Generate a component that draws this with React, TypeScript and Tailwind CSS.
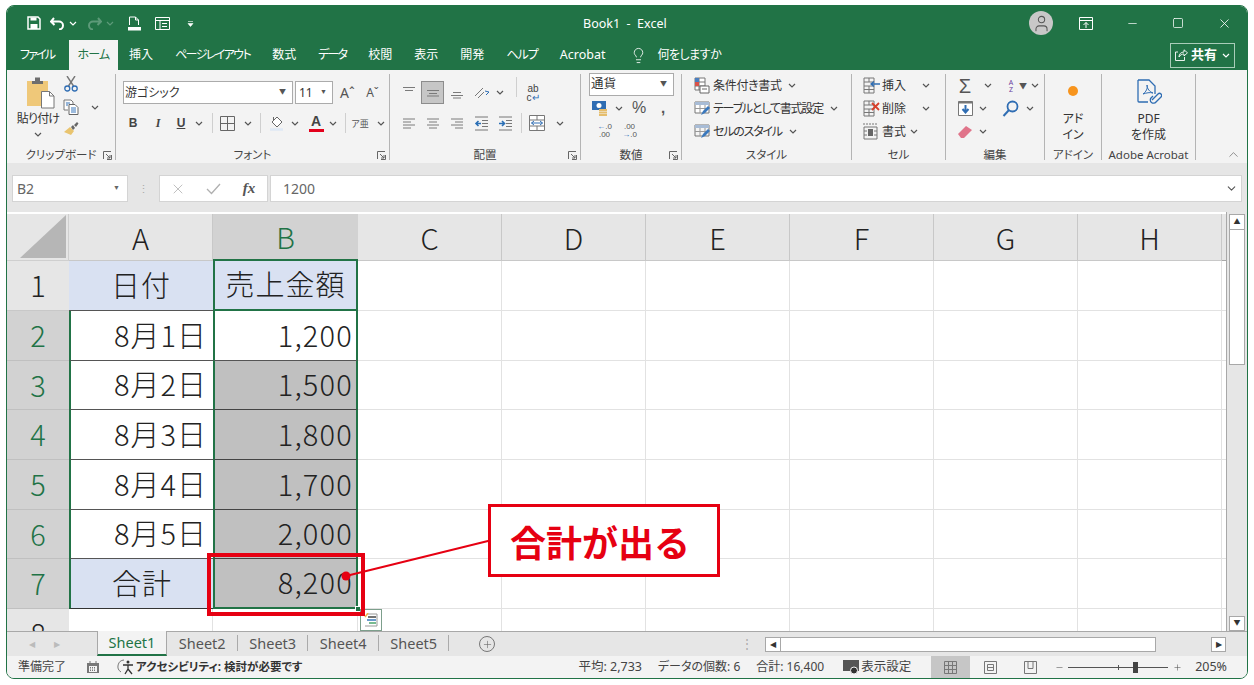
import { ChevronDown, ChevronUp, Lightbulb, Minus, Square, X, User, Plus } from "lucide-react";

const cjk = "font-['Noto_Sans','Noto_Sans_CJK_JP',sans-serif]";

function Chev({ className = "text-[#555]" }: { className?: string }) {
  return (
    <svg width="8" height="5" viewBox="0 0 8 5" className={className}>
      <path d="M1 1l3 3 3-3" fill="none" stroke="currentColor" strokeWidth="1.2" />
    </svg>
  );
}

function Launcher() {
  return (
    <svg width="9" height="9" viewBox="0 0 9 9" className="absolute right-[3px] bottom-[3px]">
      <path d="M.5 8V.5H8M8.5 4v4.5H4M3 3l4 4M7 4v3H4" fill="none" stroke="#666" strokeWidth="1" />
    </svg>
  );
}

function Group({ label, launcher, className, children }: { label: string; launcher?: boolean; className: string; children: React.ReactNode }) {
  return (
    <div className={`relative flex flex-col shrink-0 ${className}`}>
      <div className="absolute right-0 top-[4px] bottom-[3px] w-px bg-[#b4b4b4]" />
      <div className="flex-1 min-h-0">{children}</div>
      <div className="h-[20px] mr-px pt-[3px] relative flex items-center justify-center text-[11.5px] text-[#444] leading-none whitespace-nowrap">
        {label}
        {launcher && <Launcher />}
      </div>
    </div>
  );
}

function Slot({ className, children }: { className: string; children?: React.ReactNode }) {
  return <div className={`flex items-center justify-center shrink-0 h-full ${className}`}>{children}</div>;
}

function VSep({ className = "" }: { className?: string }) {
  return <div className={`w-px h-[20px] bg-[#cfcfcf] shrink-0 ${className}`} />;
}

function AlignIcon({ kind }: { kind: "top" | "mid" | "bottom" | "left" | "center" | "right" }) {
  const paths = {
    top: "M1 2.5h12M3 5.5h8",
    mid: "M1 5.5h12M3 8.5h8M1 11h12",
    bottom: "M3 7.5h8M1 10.5h12M3 13h8",
    left: "M1 3h12M1 6h8M1 9h12M1 12h8",
    center: "M1 3h12M3 6h8M1 9h12M3 12h8",
    right: "M1 3h12M5 6h8M1 9h12M5 12h8",
  };
  return (
    <svg width="14" height="15" viewBox="0 0 14 15">
      <path d={paths[kind]} fill="none" stroke="#7a7a7a" strokeWidth="1" />
    </svg>
  );
}

function Indent({ flip }: { flip?: boolean }) {
  return (
    <svg width="15" height="15" viewBox="0 0 15 15">
      <path d="M1 1h13M8 4.5h6M8 7.5h6M8 10.5h6M1 14h13" stroke="#777" fill="none" />
      <path d={flip ? "M1 7.5h5M4 5l2.5 2.5L4 10" : "M7 7.5H2M4.5 5L2 7.5 4.5 10"} stroke="#2b6fb5" strokeWidth="1.6" fill="none" />
    </svg>
  );
}

function Paste() {
  return (
    <svg width="30" height="33" viewBox="0 0 30 33">
      <rect x="1" y="5" width="21" height="25" fill="#efc879" />
      <path d="M6 5h11v3H6zM9 1.5h5V5H9z" fill="#6e6e6e" />
      <path d="M15.5 15.5h8l4.5 4.5v12h-12.500z" fill="#fff" stroke="#777" />
      <path d="M23.500 15.500v4.500h4.500" fill="none" stroke="#777" />
    </svg>
  );
}

function Cut() {
  return (
    <svg width="14" height="16" viewBox="0 0 14 16">
      <path d="M3 0l6.500 10M11 0L4.500 10" stroke="#777" strokeWidth="1.400" fill="none" />
      <circle cx="3.300" cy="12.500" r="2.500" stroke="#2f6db3" strokeWidth="1.300" fill="none" />
      <circle cx="10.700" cy="12.500" r="2.500" stroke="#2f6db3" strokeWidth="1.300" fill="none" />
    </svg>
  );
}

function Copy() {
  return (
    <svg width="16" height="16" viewBox="0 0 16 16">
      <path d="M1 1h7l2 2v3M1 1v10h4" fill="#fff" stroke="#777" />
      <path d="M6 5.500h6l3 3v7H6z" fill="#fff" stroke="#666" />
      <path d="M8 9h5M8 11h5M8 13h5M3 4h4M3 6h2" stroke="#3a78bd" />
    </svg>
  );
}

function Brush() {
  return (
    <svg width="15" height="14" viewBox="0 0 15 14">
      <path d="M0 10l6-5 4 4-3 4z" fill="#e9c46f" />
      <path d="M7 5l2-2 2 3-2 2zM10 3l3-3 1.500 1.500L12 5z" fill="#666" />
    </svg>
  );
}

function MiniGrid({ variant }: { variant: "insert" | "delete" | "format" }) {
  return (
    <svg width="18" height="17" viewBox="0 0 18 17">
      {variant === "format" ? (
        <>
          <path d="M1 0v2M4 0v2M7 0v2M10 0v2M13 0v2M1 4h13v12H1zM1 8h3M1 12h3M11 8h3M11 12h3" stroke="#777" fill="none" />
          <rect x="5" y="6" width="5" height="7" fill="#666" />
        </>
      ) : (
        <>
          <path d="M1 1h10v4H1zM1 5v4h10V5M1 9v7h10V9M6 1v4M6 9v7M1 12.500h10" stroke="#777" fill="none" />
          {variant === "insert" ? (
            <path d="M17 7H8M11 4.500L8 7l3 2.500" stroke="#2f6db3" strokeWidth="1.300" fill="none" />
          ) : (
            <path d="M9 3l7 7M16 3l-7 7" stroke="#d8402b" strokeWidth="1.800" fill="none" />
          )}
        </>
      )}
    </svg>
  );
}

function StyleIcon({ variant }: { variant: "cond" | "table" | "cell" }) {
  if (variant === "cond") {
    return (
      <svg width="16" height="17" viewBox="0 0 16 17">
        <path d="M1 1h10v12H1zM1 5h10M1 9h10M5 1v12" stroke="#777" fill="#fff" />
        <path d="M1 1h4v4H1z" fill="#4a7fc0" />
        <path d="M1 5h4v4H1z" fill="#d9534a" />
        <path d="M6 9h9v7H6z" fill="#fff" stroke="#666" />
        <path d="M8 12h5" stroke="#666" />
      </svg>
    );
  }
  return (
    <svg width="17" height="17" viewBox="0 0 17 17">
      <path d="M1 2h14v11H1z" fill={variant === "table" ? "#fff" : "#f4f4f4"} stroke="#777" />
      <path d="M1 2h14v3H1z" fill="#a8bcd6" />
      <path d="M1 8.500h14M6 5v8M11 5v8" stroke="#999" />
      <path d="M7 15l2-4 5-5 2 2-5 5z" fill="#3a78bd" />
    </svg>
  );
}

function RibbonClipboard() {
  return (
    <Group label="クリップボード" launcher className="w-[109px]">
      <div className="flex h-full">
        <div className="w-[44px] ml-[9px] pt-[6px] flex flex-col items-center">
          <div className="ml-[6px]"><Paste /></div>
          <span className="text-[12px] leading-none mt-[4px] text-[#333] whitespace-nowrap tracking-[-0.8px]">貼り付け</span>
          <Chev className="text-[#555] mt-[7px]" />
        </div>
        <div className="w-[22px] flex flex-col items-center pt-[6px] gap-[7px]">
          <Cut />
          <Copy />
          <Brush />
        </div>
        <Slot className="w-[12px] ml-[7px] !h-[74px]"><Chev /></Slot>
      </div>
    </Group>
  );
}

function RibbonFont() {
  return (
    <Group label="フォント" launcher className="w-[274px]">
      <div className="flex h-[23px] mt-[11px] pl-[7px]">
        <div className="w-[170px] h-full bg-white border border-[#ababab] flex items-center justify-between pl-[1px] pr-[6px] text-[12px] text-[#333]">
          游ゴシック
          <span className="text-[7px] text-[#555]">▼</span>
        </div>
        <div className="w-[38px] ml-[2px] h-full bg-white border border-[#ababab] flex items-center justify-between pl-[3px] pr-[5px] text-[12px] font-['Noto_Sans'] text-[#333]">
          11
          <span className="text-[7px] text-[#555]">▼</span>
        </div>
        <Slot className="w-[25px] ml-[2px] text-[14px] text-[#555]">Aˆ</Slot>
        <Slot className="w-[25px] text-[12px] text-[#555]">Aˇ</Slot>
      </div>
      <div className="flex items-center h-[22px] mt-[8px] pl-[7px] text-[#444]">
        <Slot className="w-[20px] text-[12px] font-bold font-['Liberation_Sans']">B</Slot>
        <Slot className="w-[30px] text-[12px] font-bold italic font-['Liberation_Serif']">I</Slot>
        <Slot className="w-[16px] text-[12px] font-bold underline font-['Liberation_Sans']">U</Slot>
        <Slot className="w-[20px]"><Chev /></Slot>
        <VSep className="ml-[3px]" />
        <Slot className="w-[22px] ml-[3px]">
          <svg width="15" height="15" viewBox="0 0 15 15"><path d="M.5.500h14v14H.5zM7.500.500v14M.5 7.500h14" stroke="#666" fill="none" /></svg>
        </Slot>
        <Slot className="w-[18px] ml-[1px]"><Chev /></Slot>
        <VSep className="ml-[3px]" />
        <Slot className="w-[22px] ml-[5px]">
          <svg width="16" height="16" viewBox="0 0 16 16">
            <path d="M3 7l5-5 5 5-5 5z" fill="#fff" stroke="#666" />
            <path d="M4.500 2v4" stroke="#666" />
            <path d="M1 14.500h13" stroke="#dfe9f5" strokeWidth="2.500" />
          </svg>
        </Slot>
        <Slot className="w-[13px]"><Chev /></Slot>
        <div className="w-[24px] ml-[3px] h-full flex flex-col items-center justify-center shrink-0">
          <span className="text-[14px] leading-[14px] font-semibold text-[#444] font-['Liberation_Sans']">A</span>
          <span className="w-[15px] h-[3px] bg-[#e3001b] mt-[1px]" />
        </div>
        <Slot className="w-[10px]"><Chev /></Slot>
        <VSep className="ml-[7px]" />
        <Slot className="w-[18px] ml-[5px] text-[9px] leading-[9px] text-[#555]">ア亜</Slot>
        <Slot className="w-[20px] ml-[2px]"><Chev /></Slot>
      </div>
    </Group>
  );
}

function RibbonAlign() {
  return (
    <Group label="配置" launcher className="w-[191px]">
      <div className="flex h-[23px] mt-[11px] pl-[6px]">
        <Slot className="w-[25px]"><AlignIcon kind="top" /></Slot>
        <Slot className="w-[23px] bg-[#c6c6c6] border border-[#8c8c8c]"><AlignIcon kind="mid" /></Slot>
        <Slot className="w-[25px]"><AlignIcon kind="bottom" /></Slot>
        <Slot className="w-[24px]">
          <svg width="17" height="15" viewBox="0 0 17 15">
            <path d="M2 11l8-8M5 13l6-6" stroke="#777" fill="none" />
            <path d="M12 6l4 1-3 3" stroke="#2f6db3" fill="none" />
          </svg>
        </Slot>
        <Slot className="w-[14px]"><Chev /></Slot>
        <VSep className="ml-[9px] mt-[-4px]" />
        <Slot className="w-[22px] ml-[5px] text-[10px] leading-[9px] text-[#444]">
          <span className="text-center font-['Liberation_Sans']">ab<br />c<span className="text-[#2f6db3]">↵</span></span>
        </Slot>
      </div>
      <div className="flex items-center h-[22px] mt-[8px] pl-[6px]">
        <Slot className="w-[25px]"><AlignIcon kind="left" /></Slot>
        <Slot className="w-[24px]"><AlignIcon kind="center" /></Slot>
        <Slot className="w-[24px]"><AlignIcon kind="right" /></Slot>
        <Slot className="w-[24px]"><Indent /></Slot>
        <Slot className="w-[25px]"><Indent flip /></Slot>
        <VSep className="ml-[3px]" />
        <Slot className="w-[24px] ml-[3px]">
          <svg width="16" height="16" viewBox="0 0 16 16">
            <path d="M.5.500h15v15H.5zM.5 5h15M.5 11h15M8 .5V5M8 11v4.500" stroke="#777" fill="#fff" />
            <path d="M2.500 8h11M5 6L2.500 8 5 10M11 6l2.500 2L11 10" stroke="#2f6db3" fill="none" />
          </svg>
        </Slot>
        <Slot className="w-[22px]"><Chev /></Slot>
      </div>
    </Group>
  );
}

function RibbonNumber() {
  return (
    <Group label="数値" launcher className="w-[101px]">
      <div className="w-[85px] ml-[8px] mt-[3px] h-[23px] bg-white border border-[#ababab] flex items-center justify-between pl-[1px] pr-[6px] text-[12.500px] text-[#333]">
        通貨
        <span className="text-[7px] text-[#555]">▼</span>
      </div>
      <div className="flex h-[22px] mt-[1px] pl-[9px] items-center">
        <Slot className="w-[20px]">
          <svg width="17" height="16" viewBox="0 0 17 16">
            <rect x="0" y="1" width="14" height="9" fill="#2f6db3" />
            <circle cx="7" cy="5.500" r="2.500" fill="#fff" />
            <path d="M7 9h8v2H7zM7 11.500h8v2H7zM7 14h8v2H7z" fill="#e5bd6c" />
          </svg>
        </Slot>
        <Slot className="w-[18px]"><Chev /></Slot>
        <Slot className="w-[22px] text-[16px] text-[#555] font-['Liberation_Sans']">%</Slot>
        <Slot className="w-[26px] text-[15px] font-bold text-[#555] font-['Liberation_Sans']">,</Slot>
      </div>
      <div className="flex h-[23px] pl-[14px] items-center gap-[6px] text-[8px] leading-[8px] text-[#555] font-['Liberation_Sans']">
        <span className="w-[19px] text-center"><span className="text-[#2f6db3]">←</span>.0<br />.00</span>
        <span className="w-[19px] text-center">.00<br /><span className="text-[#2f6db3]">→</span>.0</span>
      </div>
    </Group>
  );
}

function RibbonStyle() {
  return (
    <Group label="スタイル" className="w-[170px]">
      <div className="flex flex-col pt-[4px] pl-[12px] text-[12px] text-[#333] whitespace-nowrap">
        <div className="flex items-center h-[23px] gap-[3px]">
          <StyleIcon variant="cond" />
          <span className="tracking-[-0.3px]">条件付き書式</span>
          <span className="ml-[3px]"><Chev /></span>
        </div>
        <div className="flex items-center h-[23px] gap-[2px]">
          <StyleIcon variant="table" />
          <span className="tracking-[-1.2px]">テーブルとして書式設定</span>
          <span className="ml-[5px]"><Chev /></span>
        </div>
        <div className="flex items-center h-[23px] gap-[2px]">
          <StyleIcon variant="cell" />
          <span className="tracking-[-1.2px]">セルのスタイル</span>
          <span className="ml-[5px]"><Chev /></span>
        </div>
      </div>
    </Group>
  );
}

function RibbonCells() {
  return (
    <Group label="セル" className="w-[94px]">
      <div className="flex flex-col pt-[4px] pl-[11px] text-[12px] text-[#333]">
        <div className="flex items-center h-[23px] gap-[1px]"><MiniGrid variant="insert" />挿入<span className="ml-[15px]"><Chev /></span></div>
        <div className="flex items-center h-[23px] gap-[1px]"><MiniGrid variant="delete" />削除<span className="ml-[15px]"><Chev /></span></div>
        <div className="flex items-center h-[23px] gap-[1px]"><MiniGrid variant="format" />書式<span className="ml-[3px]"><Chev /></span></div>
      </div>
    </Group>
  );
}

function RibbonEdit() {
  return (
    <Group label="編集" className="w-[99px]">
      <div className="flex flex-col pt-[4px] pl-[11px]">
        <div className="flex items-center h-[23px]">
          <Slot className="w-[16px] text-[20px] text-[#555] font-['Liberation_Sans']">Σ</Slot>
          <Slot className="w-[30px]"><Chev /></Slot>
          <Slot className="w-[16px] text-[7px] leading-[7px] text-[#6a3fa0] text-center">A<br />Z</Slot>
          <span className="text-[8px] text-[#555]">▼</span>
          <Slot className="w-[12px] ml-[2px]"><Chev /></Slot>
        </div>
        <div className="flex items-center h-[23px]">
          <Slot className="w-[16px]">
            <svg width="15" height="15" viewBox="0 0 15 15">
              <path d="M.5.500h14v14H.5z" fill="#fff" stroke="#777" />
              <path d="M.5.500h14v2H.5z" fill="#777" />
              <path d="M7.500 4v7M4.500 8l3 3.500 3-3.500" stroke="#2f6db3" strokeWidth="2" fill="none" />
            </svg>
          </Slot>
          <Slot className="w-[20px]"><Chev /></Slot>
          <Slot className="w-[26px] ml-[4px]">
            <svg width="17" height="17" viewBox="0 0 17 17">
              <circle cx="10.500" cy="6.500" r="5" fill="none" stroke="#2f6db3" strokeWidth="1.800" />
              <path d="M7 10l-5.500 6" stroke="#2f6db3" strokeWidth="2" />
            </svg>
          </Slot>
          <Slot className="w-[8px] ml-[3px]"><Chev /></Slot>
        </div>
        <div className="flex items-center h-[23px]">
          <Slot className="w-[16px]">
            <svg width="16" height="14" viewBox="0 0 16 14"><path d="M1 9l8-8 6 4-8 8H4z" fill="#e0748a" /></svg>
          </Slot>
          <Slot className="w-[20px]"><Chev /></Slot>
        </div>
      </div>
    </Group>
  );
}

function RibbonAddin() {
  return (
    <Group label="アドイン" className="w-[57px]">
      <div className="flex flex-col items-center pt-[16px] pr-px text-[12px] leading-[16px] text-[#333]">
        <span className="w-[10px] h-[10px] rounded-full bg-[#f7941d] mb-[15px]" />
        <span>アド</span>
        <span>イン</span>
      </div>
    </Group>
  );
}

function RibbonAcrobat() {
  return (
    <Group label="Adobe Acrobat" className="w-[94px]">
      <div className="flex flex-col items-center pt-[9px] pr-px text-[12px] leading-[16px] text-[#333]">
        <svg width="26" height="28" viewBox="0 0 26 28" className="mb-[4px]">
          <path d="M2 1h11l6 6v8M2 1v21a1 1 0 001 1h9" fill="none" stroke="#2f6db3" strokeWidth="1.300" />
          <path d="M7 15c3-2 5-6 4-9 0 4 3 7 6 8-3-1-7 0-10 1z" fill="none" stroke="#2f6db3" />
          <path d="M16 21l6-6a2 2 0 013 3l-5 5a3 3 0 01-5-4l2-2" fill="none" stroke="#2f6db3" strokeWidth="1.300" />
        </svg>
        <span>PDF</span>
        <span>を作成</span>
      </div>
    </Group>
  );
}

function TitleBar() {
  return (
    <div className="h-[34px] bg-[#217346] flex items-center text-white relative shrink-0">
      <div className="flex items-center pl-[20px] gap-0">
        <svg width="14" height="14" viewBox="0 0 14 14">
          <path d="M1 1h10l2 2v10H1z" fill="none" stroke="#fff" strokeWidth="1.500" />
          <path d="M3.500 1.500h6v3h-6zM3.500 8h7v5h-7z" fill="#fff" />
        </svg>
        <svg width="15" height="13" viewBox="0 0 15 13" className="ml-[9px]">
          <path d="M4 1L1 4.500 4.500 8M2 4.500h7a4 4 0 010 8" fill="none" stroke="#fff" strokeWidth="2" />
        </svg>
        <Chev className="text-white ml-[4px]" />
        <svg width="15" height="13" viewBox="0 0 15 13" className="ml-[10px]">
          <path d="M11 1l3 3.500L10.500 8M13 4.500H6a4 4 0 000 8" fill="none" stroke="#5d9a79" strokeWidth="2" />
        </svg>
        <Chev className="text-[#5d9a79] ml-[4px]" />
        <svg width="13" height="15" viewBox="0 0 13 15" className="ml-[14px]">
          <path d="M1.500 9V1h6l3 3v5M7.500 1v3h3" fill="none" stroke="#fff" />
          <path d="M0 11h13v3.500H0z" fill="#fff" />
        </svg>
        <svg width="15" height="13" viewBox="0 0 15 13" className="ml-[14px]">
          <path d="M.5.500h14v12H.5zM.5 3.500h14M5 3.500v9M7 6.500h5M7 9.500h5" fill="none" stroke="#fff" />
        </svg>
        <svg width="7" height="7" viewBox="0 0 7 7" className="ml-[17px]">
          <path d="M1 1.500h5M1 3.500h5l-2.500 3z" fill="#fff" stroke="#fff" strokeWidth=".6" />
        </svg>
      </div>
      <span className="absolute left-[576px] top-[10px] text-[12.500px] leading-[16px] whitespace-nowrap">Book1&nbsp; -&nbsp; Excel</span>
      <div className="ml-auto flex items-center h-full">
        <div className="w-[24px] h-[24px] rounded-full bg-[#c8c8c8] flex items-center justify-center text-[#555]">
          <User size={19} strokeWidth={1.300} />
        </div>
        <Slot className="w-[46px] ml-[10px]">
          <svg width="14" height="13" viewBox="0 0 14 13">
            <path d="M.5.500h13v12H.5zM.5 3.500h13M7 11V5.500M4.500 8L7 5.500 9.500 8" fill="none" stroke="#fff" />
          </svg>
        </Slot>
        <Slot className="w-[46px]"><Minus size={13} strokeWidth={1.300} /></Slot>
        <Slot className="w-[46px]"><Square size={12} strokeWidth={1.500} /></Slot>
        <Slot className="w-[46px]"><X size={15} strokeWidth={1.300} /></Slot>
      </div>
    </div>
  );
}

function TabsBar() {
  return (
    <div className="h-[30px] bg-[#217346] flex items-center text-white text-[12px] relative shrink-0">
      <span className="ml-[13px] w-[49px] tracking-[-1.800px] whitespace-nowrap">ファイル</span>
      <div className="h-[30px] w-[49px] bg-[#f3f3f3] text-[#217346] flex items-center justify-center tracking-[-0.800px]">ホーム</div>
      <div className="flex items-center gap-[22px] ml-[11px] whitespace-nowrap">
        <span>挿入</span>
        <span className="tracking-[-1.600px]">ページレイアウト</span>
        <span>数式</span>
        <span className="tracking-[-1.800px]">データ</span>
        <span>校閲</span>
        <span>表示</span>
        <span>開発</span>
        <span className="tracking-[-1px]">ヘルプ</span>
        <span className="font-['Noto_Sans'] text-[12.500px]">Acrobat</span>
      </div>
      <Lightbulb size={17} strokeWidth={1.200} className="ml-[25px]" />
      <span className="ml-[10px] tracking-[-0.500px]">何をしますか</span>
      <div className="ml-auto mr-[12px] w-[65px] h-[25px] border border-[#a9cdb9] flex items-center justify-center gap-[3px] text-[13px] font-bold">
        <svg width="13" height="12" viewBox="0 0 13 12">
          <path d="M3 3H.5v8.500h9V8M4 8c0-3 2-5 5-5V.8l3.500 3L9 7V5C7 5 5 6 4 8z" fill="none" stroke="#fff" strokeWidth=".9" />
        </svg>
        共有
        <Chev className="text-white ml-[2px]" />
      </div>
    </div>
  );
}

function Ribbon() {
  return (
    <div className="h-[93px] bg-[#f3f3f3] flex relative shrink-0">
      <RibbonClipboard />
      <RibbonFont />
      <RibbonAlign />
      <RibbonNumber />
      <RibbonStyle />
      <RibbonCells />
      <RibbonEdit />
      <RibbonAddin />
      <RibbonAcrobat />
      <div className="flex-1 flex items-end justify-end pb-[1px] pr-[6px] text-[#555]">
        <ChevronUp size={15} strokeWidth={1} />
      </div>
    </div>
  );
}

function FormulaBar() {
  return (
    <div className="h-[49px] bg-[#e6e6e6] flex items-start pt-[12px] pl-[5px] pr-[5px] shrink-0 text-[14px] text-[#666] font-['Noto_Sans']">
      <div className="w-[116px] h-[27px] bg-white border border-[#d4d4d4] flex items-center justify-between pl-[4px] pr-[7px]">
        B2
        <span className="text-[7px] text-[#666]">▼</span>
      </div>
      <div className="w-[31px] h-[27px] flex items-center justify-center text-[#aaa] text-[11px] leading-[5px] text-center">
        <span>⋮</span>
      </div>
      <div className="w-[109px] h-[27px] bg-white border border-[#d4d4d4] flex items-center">
        <Slot className="w-[35px] text-[#b0b0b0]"><X size={16} strokeWidth={1.200} /></Slot>
        <Slot className="w-[36px] text-[#b0b0b0]">
          <svg width="15" height="12" viewBox="0 0 15 12"><path d="M1 6l4.500 4.500L14 1" stroke="#b0b0b0" strokeWidth="1.300" fill="none" /></svg>
        </Slot>
        <Slot className="w-[36px] text-[15px] italic font-['Liberation_Serif'] text-[#555] font-bold">fx</Slot>
      </div>
      <div className="flex-1 ml-[2px] h-[27px] bg-white border border-[#d4d4d4] flex items-center justify-between pl-[12px] pr-[3px]">
        1200
        <ChevronDown size={13} className="text-[#555]" strokeWidth={2} />
      </div>
    </div>
  );
}

type RowData = { n: number; a: string; b: string };

const rows: RowData[] = [
  { n: 1, a: "日付", b: "売上金額" },
  { n: 2, a: "8月1日", b: "1,200" },
  { n: 3, a: "8月2日", b: "1,500" },
  { n: 4, a: "8月3日", b: "1,800" },
  { n: 5, a: "8月4日", b: "1,700" },
  { n: 6, a: "8月5日", b: "2,000" },
  { n: 7, a: "合計", b: "8,200" },
];

function EmptyCells() {
  return (
    <>
      {["C", "D", "E", "F", "G", "H"].map((c) => (
        <div key={c} className="border-r border-b border-[#e2e2e2]" />
      ))}
      <div className="border-b border-[#e2e2e2]" />
    </>
  );
}

function Sheet() {
  return (
    <div className="relative flex-1 min-w-0 bg-white border-r border-[#a8a8a8] overflow-hidden pt-[2px]">
      <div className="grid grid-cols-[62px_144px_145px_144px_144px_144px_144px_144px_144px_4px] grid-rows-[47px_50px_50px_49px_50px_50px_49px_50px_50px] text-[29px] leading-none font-light text-[#222] [font-feature-settings:normal] font-['Noto_Sans_CJK_JP',sans-serif]">
        <div className="bg-[#e6e6e6] border-r border-b border-[#cfcfcf] relative">
          <svg width="46" height="43" viewBox="0 0 46 43" className="absolute right-[2px] bottom-[2px]">
            <path d="M0 43L46 0v43z" fill="#b6b6b6" />
          </svg>
        </div>
        {["A", "B", "C", "D", "E", "F", "G", "H"].map((c) => (
          <div
            key={c}
            className={
              c === "B"
                ? "flex items-center justify-center bg-[#d2d2d2] border-b-2 border-[#217346] text-[#217346]"
                : "flex items-center justify-center bg-[#e6e6e6] border-r border-b border-[#c8c8c8]"
            }
          >
            {c}
          </div>
        ))}
        <div className="bg-[#e6e6e6] border-b border-[#a8a8a8]" />
        {rows.map((r) => (
          <div key={r.n} className="contents">
            <div
              className={
                r.n === 1
                  ? "flex items-center justify-center pb-[2px] bg-[#e6e6e6] border-b border-[#c8c8c8]"
                  : "flex items-center justify-center pb-[2px] bg-[#d2d2d2] border-b border-[#c0c0c0] text-[#217346]"
              }
            >
              {r.n}
            </div>
            <div
              className={
                r.n === 1
                  ? "flex items-center justify-center pb-[3px] tracking-[1px] bg-[#d9e1f2] border-b border-[#555]"
                  : r.n === 7
                    ? "flex items-center justify-center pb-[3px] tracking-[1px] bg-[#d9e1f2] border-l-2 border-l-[#217346] border-b border-b-[#333]"
                    : "flex items-center justify-end pb-[3px] pr-[6px] tracking-[1px] bg-white border-l-2 border-l-[#217346] border-b border-b-[#555]"
              }
            >
              {r.a}
            </div>
            <div
              className={
                r.n === 1
                  ? "flex items-center justify-center pb-[3px] tracking-[1px] bg-[#d9e1f2] border-x-2 border-[#217346] border-b-2"
                  : r.n === 2
                    ? "flex items-center justify-end pb-[3px] pr-[3px] tracking-[1.200px] bg-white border-x-2 border-b border-x-[#217346] border-b-[#555]"
                    : r.n === 7
                      ? "flex items-center justify-end pb-[3px] pr-[3px] tracking-[1.200px] bg-[#c0c0c0] border-x-2 border-b-2 border-[#217346]"
                      : "flex items-center justify-end pb-[3px] pr-[3px] tracking-[1.200px] bg-[#c0c0c0] border-x-2 border-b border-x-[#217346] border-b-[#444]"
              }
            >
              {r.b}
            </div>
            <EmptyCells />
          </div>
        ))}
        <div className="flex justify-center items-start pt-[9px] bg-[#e6e6e6]">8</div>
        <div className="border-r border-[#e2e2e2]" />
        <div className="border-r border-[#e2e2e2]" />
        <EmptyCells />
      </div>

      {/* fill handle, quick analysis button */}
      <div className="absolute left-[348px] top-[394px] w-[6px] h-[6px] bg-[#217346] border border-white" />
      <div className="absolute left-[353px] top-[397px] w-[22px] h-[22px] bg-white border border-[#7d9f8c] flex items-center justify-center">
        <svg width="14" height="14" viewBox="0 0 14 14">
          <path d="M3 1h10v12H1" fill="none" stroke="#999" />
          <path d="M4 4h8" stroke="#444" strokeWidth="1.500" />
          <path d="M3 7h9" stroke="#3a78bd" strokeWidth="1.500" />
          <path d="M5 10h7" stroke="#4ba36b" strokeWidth="1.500" />
          <path d="M1 4l3-4" stroke="#eeb34f" strokeWidth="1.500" />
        </svg>
      </div>

      {/* annotation */}
      <div className="absolute left-[200px] top-[341px] w-[158px] h-[63px] border-[4px] border-[#e60012]" />
      <svg className="absolute left-[330px] top-[320px]" width="160" height="55" viewBox="0 0 160 55">
        <path d="M9 44L155 8" stroke="#e60012" strokeWidth="2" />
        <circle cx="9" cy="44" r="4.500" fill="#e60012" />
      </svg>
      <div className="absolute left-[481px] top-[292px] w-[232px] h-[73px] border-[3px] border-[#e60012] bg-white flex items-center pl-[19px] text-[36px] font-bold text-[#e60012] font-['Noto_Sans_CJK_JP',sans-serif] [font-feature-settings:normal] whitespace-nowrap">
        合計が出る
      </div>
    </div>
  );
}

function VScroll() {
  return (
    <div className="w-[20px] bg-[#e6e6e6] shrink-0 flex flex-col pt-[2px] pl-[2px] pr-[2px]">
      <div className="h-[16px] bg-white border border-[#a8a8a8] flex items-center justify-center text-[7px] text-[#333]">▲</div>
      <div className="h-[135px] bg-white border-x border-b border-[#a8a8a8]" />
      <div className="flex-1" />
      <div className="h-[15px] bg-white border border-[#a8a8a8] flex items-center justify-center text-[7px] text-[#333]">▼</div>
    </div>
  );
}

function SheetTabs() {
  const others = ["Sheet2", "Sheet3", "Sheet4", "Sheet5"];
  return (
    <div className="h-[25px] bg-[#e6e6e6] flex items-stretch shrink-0 border-t border-[#a8a8a8] text-[14.500px] text-[#555] font-['Noto_Sans']">
      <div className="w-[90px] flex items-center gap-[19px] pl-[22px] text-[8px] text-[#bbb] shrink-0">
        <span>◀</span>
        <span>▶</span>
      </div>
      <div className="w-[70px] bg-[#f3f3f3] border-x border-[#a8a8a8] -mt-px border-b-2 border-b-[#217346] flex items-center justify-center text-[#217346] shrink-0">Sheet1</div>
      {others.map((s) => (
        <div key={s} className="w-[70.500px] shrink-0 flex items-center justify-center relative">
          {s}
          <span className="absolute right-0 top-[3px] bottom-[5px] w-px bg-[#aaa]" />
        </div>
      ))}
      <div className="w-[76px] flex items-center justify-center text-[#666] shrink-0">
        <span className="w-[16px] h-[16px] rounded-full border border-[#777] flex items-center justify-center">
          <Plus size={11} strokeWidth={1.300} />
        </span>
      </div>
      <div className="flex-1 flex items-center justify-end pr-[12px] text-[#aaa] text-[12px]">⋮</div>
      <div className="w-[482px] shrink-0 flex items-center pr-[21px] text-[8px] text-[#333]">
        <div className="w-[16px] h-[15px] bg-white border border-[#a8a8a8] flex items-center justify-center">◀</div>
        <div className="w-[375px] h-[15px] bg-white border-y border-r border-[#a8a8a8]" />
        <div className="flex-1" />
        <div className="w-[15px] h-[15px] bg-white border border-[#a8a8a8] flex items-center justify-center">▶</div>
      </div>
    </div>
  );
}

function StatusBar() {
  return (
    <div className="h-[22px] bg-[#f3f3f3] flex items-center shrink-0 text-[12px] text-[#444] whitespace-nowrap">
      <span className="ml-[11px]">準備完了</span>
      <svg width="12" height="12" viewBox="0 0 12 12" className="ml-[21px]">
        <path d="M0 2h12v10H0z" fill="#777" />
        <path d="M2 5h8v6H2z" fill="#f3f3f3" />
        <path d="M3 6.500h6M3 8h6M3 9.500h6" stroke="#777" strokeDasharray="1 1" />
        <path d="M3 0v3M9 0v3" stroke="#777" />
      </svg>
      <svg width="18" height="16" viewBox="0 0 18 16" className="ml-[18px]">
        <path d="M7 1a6.500 6.500 0 00-3 12" fill="none" stroke="#777" />
        <circle cx="11" cy="3" r="1.500" fill="#333" />
        <path d="M6 6h10M11 6v4l-3 5M11 10l4 5" fill="none" stroke="#333" strokeWidth="1.300" />
      </svg>
      <span className="ml-[1px] font-bold text-[11.500px] text-[#333]">アクセシビリティ: 検討が必要です</span>
      <div className="ml-auto flex items-center h-full">
        <span className="text-[12.500px]">平均: 2,733</span>
        <span className="ml-[16px]">データの個数: 6</span>
        <span className="ml-[16px]">合計: 16,400</span>
        <svg width="17" height="15" viewBox="0 0 17 15" className="ml-[19px]">
          <path d="M0 0h16v11H0z" fill="#555" />
          <circle cx="11" cy="10.500" r="3.500" fill="#333" stroke="#f3f3f3" />
        </svg>
        <span className="ml-[1px] text-[12.500px]">表示設定</span>
        <Slot className="w-[39px] ml-[20px] bg-[#c6c6c6]">
          <svg width="13" height="13" viewBox="0 0 13 13"><path d="M.5.500h12v12H.5zM4.500.500v12M8.500.500v12M.5 4.500h12M.5 8.500h12" stroke="#777" fill="none" /></svg>
        </Slot>
        <Slot className="w-[40px]">
          <svg width="13" height="13" viewBox="0 0 13 13"><path d="M.5.500h12v12H.5zM3.500 3.500h6v6h-6zM3.500 6.500h6" stroke="#777" fill="none" /></svg>
        </Slot>
        <Slot className="w-[41px]">
          <svg width="13" height="13" viewBox="0 0 13 13"><path d="M.5.500h12v12H.5zM4 .5v7h5v-7" stroke="#777" fill="none" /></svg>
        </Slot>
        <Minus size={9} strokeWidth={1.500} className="text-[#555] ml-[4px]" />
        <div className="w-[100px] ml-[4px] relative h-px bg-[#555]">
          <span className="absolute left-1/2 -top-[2px] w-px h-[5px] bg-[#555]" />
          <span className="absolute left-[65px] -top-[5px] w-[5px] h-[11px] bg-[#444]" />
        </div>
        <Plus size={9} strokeWidth={1.500} className="text-[#555] ml-[5px]" />
        <span className="ml-[13px] mr-[20px] text-[12.500px] font-['Noto_Sans']">205%</span>
      </div>
    </div>
  );
}

export default function App() {
  return (
    <div className={`w-[1254px] h-[685px] bg-white pt-[5px] pb-[6px] px-[6px] ${cjk} [font-feature-settings:'palt']`}>
      <div className="h-full rounded-[8px] overflow-hidden border border-[#217346] flex flex-col bg-[#e6e6e6]">
        <TitleBar />
        <TabsBar />
        <Ribbon />
        <FormulaBar />
        <div className="h-[419px] flex shrink-0">
          <Sheet />
          <VScroll />
        </div>
        <SheetTabs />
        <StatusBar />
      </div>
    </div>
  );
}
